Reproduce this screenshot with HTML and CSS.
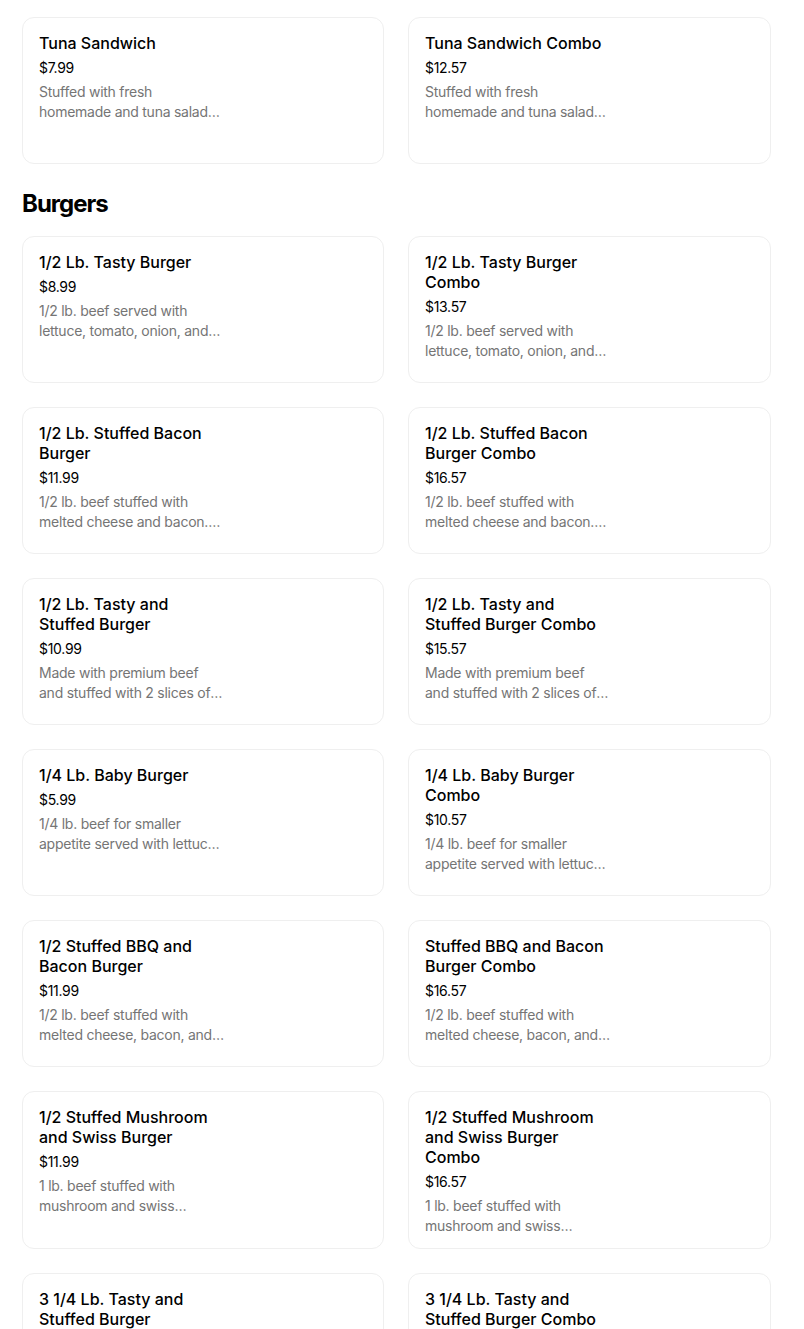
FILE: index.html
```
<!DOCTYPE html>
<html lang="en">
<head>
    <meta charset="UTF-8">
    <meta name="viewport" content="width=device-width, initial-scale=1.0">
    <title>Menu</title>
    <link rel="stylesheet" href="styles.css">
</head>
<body>

<div class="menu">
    <!-- Sandwiches (end of section) -->
    <section class="menu-section">
        <div class="item-grid">
            <div class="item-card">
                <div class="item-info">
                    <h3 class="item-name">Tuna Sandwich</h3>
                    <p class="item-price">$7.99</p>
                    <p class="item-desc">Stuffed with fresh homemade and tuna salad served on toasted bread.</p>
                </div>
            </div>
            <div class="item-card">
                <div class="item-info">
                    <h3 class="item-name">Tuna Sandwich Combo</h3>
                    <p class="item-price">$12.57</p>
                    <p class="item-desc">Stuffed with fresh homemade and tuna salad served on toasted bread.</p>
                </div>
            </div>
        </div>
    </section>

    <!-- Burgers -->
    <section class="menu-section">
        <h2 class="section-title">Burgers</h2>
        <div class="item-grid">
            <div class="item-card">
                <div class="item-info">
                    <h3 class="item-name">1/2 Lb. Tasty Burger</h3>
                    <p class="item-price">$8.99</p>
                    <p class="item-desc">1/2 lb. beef served with lettuce, tomato, onion, and pickles.</p>
                </div>
            </div>
            <div class="item-card">
                <div class="item-info">
                    <h3 class="item-name">1/2 Lb. Tasty Burger Combo</h3>
                    <p class="item-price">$13.57</p>
                    <p class="item-desc">1/2 lb. beef served with lettuce, tomato, onion, and pickles.</p>
                </div>
            </div>

            <div class="item-card">
                <div class="item-info">
                    <h3 class="item-name">1/2 Lb. Stuffed Bacon Burger</h3>
                    <p class="item-price">$11.99</p>
                    <p class="item-desc">1/2 lb. beef stuffed with melted cheese and bacon. Served with lettuce and tomato.</p>
                </div>
            </div>
            <div class="item-card">
                <div class="item-info">
                    <h3 class="item-name">1/2 Lb. Stuffed Bacon Burger Combo</h3>
                    <p class="item-price">$16.57</p>
                    <p class="item-desc">1/2 lb. beef stuffed with melted cheese and bacon. Served with lettuce and tomato.</p>
                </div>
            </div>

            <div class="item-card">
                <div class="item-info">
                    <h3 class="item-name">1/2 Lb. Tasty and Stuffed Burger</h3>
                    <p class="item-price">$10.99</p>
                    <p class="item-desc">Made with premium beef and stuffed with 2 slices of american cheese.</p>
                </div>
            </div>
            <div class="item-card">
                <div class="item-info">
                    <h3 class="item-name">1/2 Lb. Tasty and Stuffed Burger Combo</h3>
                    <p class="item-price">$15.57</p>
                    <p class="item-desc">Made with premium beef and stuffed with 2 slices of american cheese.</p>
                </div>
            </div>

            <div class="item-card">
                <div class="item-info">
                    <h3 class="item-name">1/4 Lb. Baby Burger</h3>
                    <p class="item-price">$5.99</p>
                    <p class="item-desc">1/4 lb. beef for smaller appetite served with lettuce, tomato, onion, and pickles.</p>
                </div>
            </div>
            <div class="item-card">
                <div class="item-info">
                    <h3 class="item-name">1/4 Lb. Baby Burger Combo</h3>
                    <p class="item-price">$10.57</p>
                    <p class="item-desc">1/4 lb. beef for smaller appetite served with lettuce, tomato, onion, and pickles.</p>
                </div>
            </div>

            <div class="item-card">
                <div class="item-info">
                    <h3 class="item-name">1/2 Stuffed BBQ and Bacon Burger</h3>
                    <p class="item-price">$11.99</p>
                    <p class="item-desc">1/2 lb. beef stuffed with melted cheese, bacon, and BBQ sauce.</p>
                </div>
            </div>
            <div class="item-card">
                <div class="item-info">
                    <h3 class="item-name">Stuffed BBQ and Bacon Burger Combo</h3>
                    <p class="item-price">$16.57</p>
                    <p class="item-desc">1/2 lb. beef stuffed with melted cheese, bacon, and BBQ sauce.</p>
                </div>
            </div>

            <div class="item-card">
                <div class="item-info">
                    <h3 class="item-name">1/2 Stuffed Mushroom and Swiss Burger</h3>
                    <p class="item-price">$11.99</p>
                    <p class="item-desc">1 lb. beef stuffed with mushroom and swiss cheese.</p>
                </div>
            </div>
            <div class="item-card">
                <div class="item-info">
                    <h3 class="item-name">1/2 Stuffed Mushroom and Swiss Burger Combo</h3>
                    <p class="item-price">$16.57</p>
                    <p class="item-desc">1 lb. beef stuffed with mushroom and swiss cheese.</p>
                </div>
            </div>

            <div class="item-card">
                <div class="item-info">
                    <h3 class="item-name">3 1/4 Lb. Tasty and Stuffed Burger</h3>
                    <p class="item-price">$19.99</p>
                    <p class="item-desc">Three 1/4 lb. patties stuffed with cheese, served with lettuce and tomato.</p>
                </div>
            </div>
            <div class="item-card">
                <div class="item-info">
                    <h3 class="item-name">3 1/4 Lb. Tasty and Stuffed Burger Combo</h3>
                    <p class="item-price">$24.57</p>
                    <p class="item-desc">Three 1/4 lb. patties stuffed with cheese, served with lettuce and tomato.</p>
                </div>
            </div>
        </div>
    </section>
</div>

</body>
</html>
```

FILE: styles.css
```
body {
    font-family: Inter, "Noto Sans", sans-serif;
    margin: 0;
    padding: 0;
    background-color: #fff;
    color: #000;
}
.menu {
    width: 749px;
    margin-left: 22px;
    padding-top: 17px;
}
.menu-section {
    margin-bottom: 24px;
}
.section-title {
    font-size: 24px;
    font-weight: 700;
    line-height: 32px;
    letter-spacing: -1px;
    margin: 0 0 16px;
}
.item-grid {
    display: grid;
    grid-template-columns: 362px 363px;
    gap: 24px;
}
.item-card {
    box-sizing: border-box;
    min-height: 147px;
    padding: 15px 16px 12px;
    border: 1px solid #efefef;
    border-radius: 12px;
    background-color: #fff;
}
.item-info {
    width: 186px;
}
.item-name {
    font-size: 16px;
    font-weight: 500;
    line-height: 20px;
    margin: 0 0 5px;
}
.item-price {
    font-size: 14px;
    line-height: 20px;
    letter-spacing: -0.3px;
    margin: 0 0 4px;
}
.item-desc {
    font-size: 14px;
    line-height: 20px;
    letter-spacing: -0.25px;
    color: #757575;
    margin: 0;
    display: -webkit-box;
    -webkit-box-orient: vertical;
    -webkit-line-clamp: 2;
    overflow: hidden;
}
```
